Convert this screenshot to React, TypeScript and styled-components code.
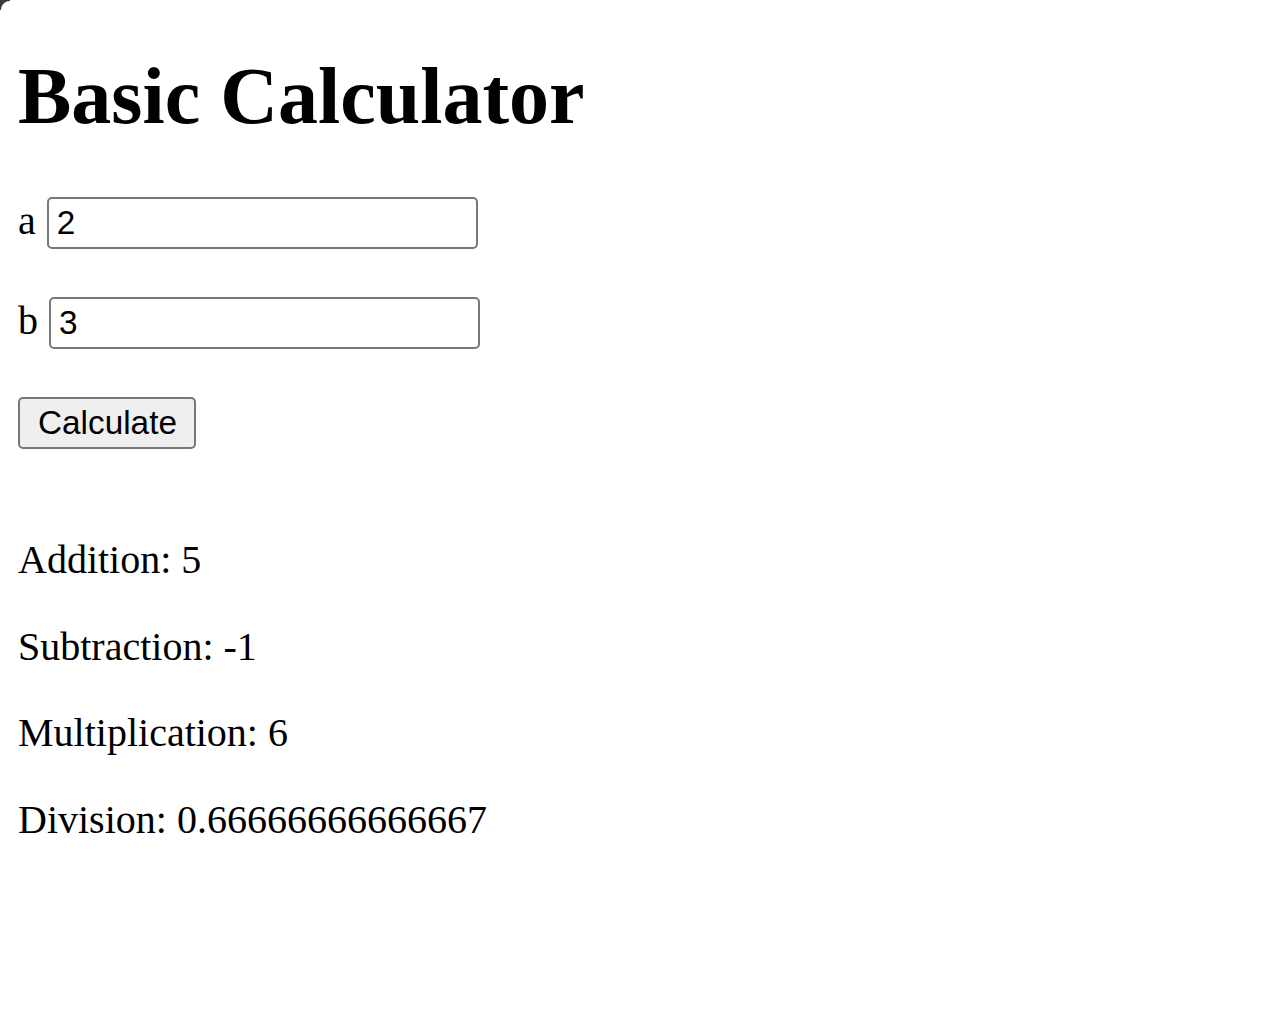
import React, { useState } from "react";
import styled, { createGlobalStyle } from "styled-components";

const GlobalStyle = createGlobalStyle`
  html, body {
    margin: 0;
    padding: 0;
    background: #ffffff;
  }
  body {
    font-family: "Liberation Serif", "Times New Roman", serif;
    color: #000000;
  }
  body::before {
    content: "";
    position: fixed;
    top: 0;
    left: 0;
    width: 10px;
    height: 10px;
    background: radial-gradient(circle at 10px 10px, transparent 8.5px, #3a3a3a 9.5px);
    pointer-events: none;
  }
`;

const Page = styled.main`
  padding: 0 0 0 18px;
  display: flex;
  flex-direction: column;
  align-items: flex-start;
`;

const Title = styled.h1`
  font-family: "Liberation Serif", "Times New Roman", serif;
  font-size: 80px;
  font-weight: 700;
  line-height: 92px;
  margin: 50px 0 55px 0;
`;

const Form = styled.form`
  display: flex;
  flex-direction: column;
  align-items: flex-start;
  gap: 48px;
`;

const Field = styled.label`
  display: flex;
  align-items: baseline;
  gap: 11px;
  font-size: 40px;
  line-height: 46px;
`;

const Input = styled.input`
  box-sizing: border-box;
  width: 431px;
  height: 52px;
  margin: 0;
  padding: 0 8px;
  border: 2px solid #777777;
  border-radius: 5px;
  background: #ffffff;
  font-family: "Liberation Sans", Arial, sans-serif;
  font-size: 33.33px;
  color: #000000;
  outline: none;
`;

const Button = styled.button`
  box-sizing: border-box;
  height: 52px;
  margin: 0;
  padding: 0 17px 0 18px;
  border: 2px solid #777777;
  border-radius: 5px;
  background: #efefef;
  font-family: "Liberation Sans", Arial, sans-serif;
  font-size: 33.33px;
  color: #000000;
  cursor: pointer;
`;

const Results = styled.section`
  display: flex;
  flex-direction: column;
  gap: 40.67px;
  margin-top: 88px;
`;

const Result = styled.p`
  margin: 0;
  font-size: 40px;
  line-height: 46px;
`;

function fmt(n: number): string {
  if (!isFinite(n)) return String(n);
  return String(parseFloat(n.toPrecision(14)));
}

export default function App() {
  const [a, setA] = useState("2");
  const [b, setB] = useState("3");
  const [res, setRes] = useState({ x: 2, y: 3 });

  const onSubmit = (e: React.FormEvent) => {
    e.preventDefault();
    setRes({ x: parseFloat(a), y: parseFloat(b) });
  };

  return (
    <>
      <GlobalStyle />
      <Page>
        <Title>Basic Calculator</Title>
        <Form onSubmit={onSubmit}>
          <Field>
            a
            <Input type="text" value={a} onChange={(e) => setA(e.target.value)} />
          </Field>
          <Field>
            b
            <Input type="text" value={b} onChange={(e) => setB(e.target.value)} />
          </Field>
          <Button type="submit">Calculate</Button>
        </Form>
        <Results>
          <Result>Addition: {fmt(res.x + res.y)}</Result>
          <Result>Subtraction: {fmt(res.x - res.y)}</Result>
          <Result>Multiplication: {fmt(res.x * res.y)}</Result>
          <Result>Division: {fmt(res.x / res.y)}</Result>
        </Results>
      </Page>
    </>
  );
}
